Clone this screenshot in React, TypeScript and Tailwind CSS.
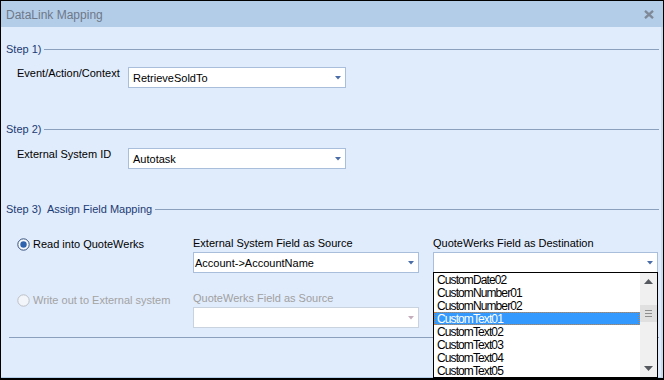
import React from "react";

const items = [
  "CustomDate02",
  "CustomNumber01",
  "CustomNumber02",
  "CustomText01",
  "CustomText02",
  "CustomText03",
  "CustomText04",
  "CustomText05",
];

function Arrow({ disabled }: { disabled?: boolean }) {
  return (
    <svg width="6" height="4" viewBox="0 0 6 4" className="shrink-0">
      <path d="M0 0H6L3 3.5Z" fill={disabled ? "#c6adbd" : "#4a6ca8"} />
    </svg>
  );
}

function Combo({
  value,
  disabled,
  className = "",
}: {
  value?: string;
  disabled?: boolean;
  className?: string;
}) {
  return (
    <div
      className={`h-[21px] flex items-center justify-between bg-white border pr-[4px] ${
        disabled ? "border-[#c9d3df]" : "border-[#a9bedb]"
      } ${className}`}
    >
      <span className="text-[11px] leading-[13px] text-black pt-[2px]">{value}</span>
      <Arrow disabled={disabled} />
    </div>
  );
}

function StepHeader({ title }: { title: string }) {
  return (
    <div className="h-[14px] flex items-center">
      <span className="text-[11px] leading-[14px] text-[#1c3b73] whitespace-pre">{title}</span>
      <div className="flex-1 h-px bg-[#8aa0bd] ml-[3px]" />
    </div>
  );
}

function Radio({ checked }: { checked?: boolean }) {
  return checked ? (
    <svg width="13" height="13" viewBox="0 0 13 13" className="shrink-0">
      <circle cx="6.5" cy="6.5" r="5.7" fill="#f7f9fc" stroke="#34507c" strokeWidth="1" />
      <circle cx="6.5" cy="6.5" r="3.2" fill="#2f63ad" />
    </svg>
  ) : (
    <svg width="13" height="13" viewBox="0 0 13 13" className="shrink-0">
      <circle cx="6.5" cy="6.5" r="5.7" fill="#f2f5f9" stroke="#bcc0c6" strokeWidth="1" />
    </svg>
  );
}

function Tri({ up }: { up?: boolean }) {
  return (
    <svg width="9" height="5" viewBox="0 0 9 5">
      <path d={up ? "M4.5 0L9 5H0Z" : "M0 0H9L4.5 5Z"} fill="#55595f" />
    </svg>
  );
}

function FieldList() {
  return (
    <div className="absolute top-[35px] left-0 w-[225px] h-[106px] border border-black bg-white flex z-10">
      <div className="flex-1 flex flex-col">
        {items.map((item, i) => (
          <div
            key={item}
            className={`h-[13px] pl-[2px] text-[12px] leading-[13px] tracking-[-0.9px] ${
              i === 3
                ? "bg-[#3399ff] text-white border border-dotted border-[#d9822b] leading-[11px]"
                : "text-black border border-transparent leading-[11px]"
            }`}
          >
            {item}
          </div>
        ))}
      </div>
      <div className="w-[17px] bg-[#f0f0f0] flex flex-col">
        <div className="h-[17px] flex items-center justify-center">
          <Tri up />
        </div>
        <div className="flex-1">
          <div className="mt-[15px] h-[17px] bg-[#e0e0e0] flex flex-col items-center justify-center gap-[2px]">
            <div className="w-[7px] h-px bg-[#8e8e8e]" />
            <div className="w-[7px] h-px bg-[#8e8e8e]" />
            <div className="w-[7px] h-px bg-[#8e8e8e]" />
          </div>
        </div>
        <div className="h-[17px] flex items-center justify-center">
          <Tri />
        </div>
      </div>
    </div>
  );
}

export default function App() {
  return (
    <div className="w-[664px] h-[380px] border border-b-2 border-black flex flex-col [font-family:'Liberation_Sans',Arial,sans-serif] overflow-hidden">
      {/* Title bar */}
      <div className="h-[26px] shrink-0 bg-[#b3cde9] flex items-center justify-between pl-[5px] pr-[9px]">
        <span className="text-[12px] text-[#6e7888] pt-[1px]">DataLink Mapping</span>
        <svg width="10" height="9" viewBox="0 0 10 9">
          <path d="M1 0.8L9 8.2M9 0.8L1 8.2" stroke="#7f8896" strokeWidth="2.3" />
        </svg>
      </div>

      {/* Body */}
      <div className="flex-1 bg-[#e0ecfc] border-r-2 border-r-[#c9d9ee] border-b border-b-[#b3cde9] pl-[5px] pr-[2px] flex flex-col">
        <div className="mt-[15px]">
          <StepHeader title="Step 1)" />
        </div>
        <div className="mt-[11px] flex items-start">
          <span className="ml-[11px] w-[111px] text-[11px] leading-[13px] text-black">Event/Action/Context</span>
          <Combo value="RetrieveSoldTo" className="w-[218px] pl-[4px]" />
        </div>

        <div className="mt-[34px]">
          <StepHeader title="Step 2)" />
        </div>
        <div className="mt-[12px] flex items-start">
          <span className="ml-[11px] w-[111px] text-[11px] leading-[13px] text-black">External System ID</span>
          <Combo value="Autotask" className="w-[218px] pl-[4px]" />
        </div>

        <div className="mt-[33px]">
          <StepHeader title="Step 3)  Assign Field Mapping" />
        </div>

        {/* Read row */}
        <div className="mt-[21px] flex items-start">
          <div className="ml-[11px] w-[176px] mt-[1px] flex items-center gap-[3px]">
            <Radio checked />
            <span className="text-[11px] leading-[13px] text-black">Read into QuoteWerks</span>
          </div>
          <div className="w-[226px] flex flex-col">
            <span className="text-[11px] leading-[13px] text-black">External System Field as Source</span>
            <Combo value="Account->AccountName" className="mt-[2px] w-[226px] pl-[1px]" />
          </div>
          <div className="ml-[14px] w-[225px] flex flex-col relative">
            <span className="text-[11px] leading-[13px] text-black">QuoteWerks Field as Destination</span>
            <Combo className="mt-[2px] w-[225px] pl-[1px]" />
            <FieldList />
          </div>
        </div>

        {/* Write row */}
        <div className="mt-[19px] flex items-start">
          <div className="ml-[11px] w-[176px] mt-[2px] flex items-center gap-[3px]">
            <Radio />
            <span className="text-[11px] leading-[13px] text-[#a3a3a3]">Write out to External system</span>
          </div>
          <div className="w-[226px] flex flex-col">
            <span className="text-[11px] leading-[13px] text-[#a0a0a0]">QuoteWerks Field as Source</span>
            <Combo disabled className="mt-[2px] w-[226px] pl-[1px]" />
          </div>
        </div>

        <div className="mt-[9px] ml-[3px] h-px bg-[#8aa0bd]" />
      </div>
    </div>
  );
}
